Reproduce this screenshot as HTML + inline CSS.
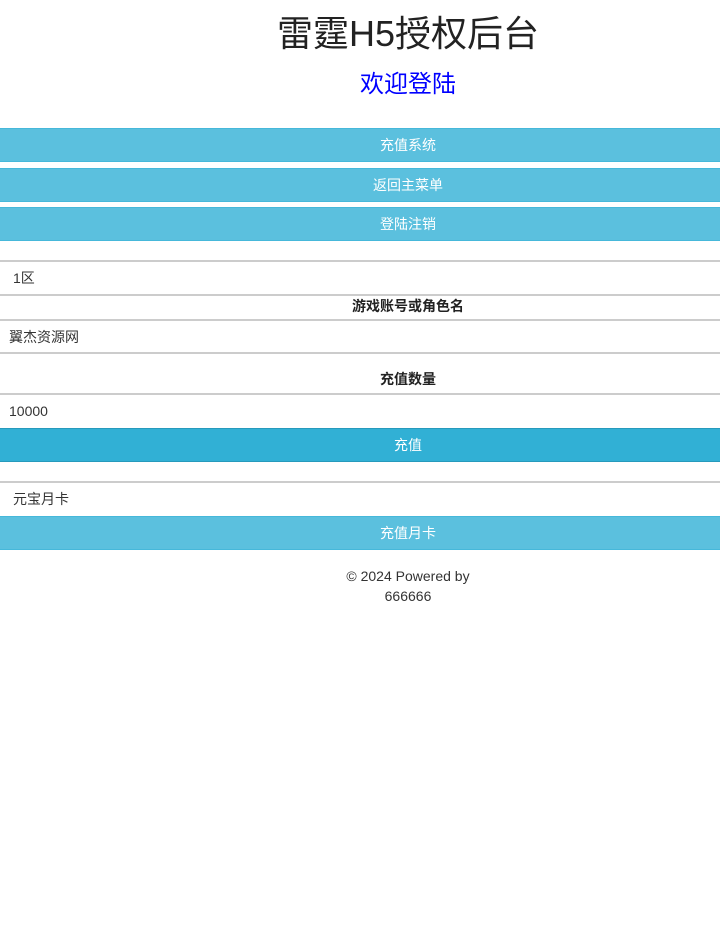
<!DOCTYPE html>
<html><head><meta charset="utf-8"><style>
*{box-sizing:border-box;margin:0;padding:0}
body{width:720px;height:931px;background:#fff;font-family:"Liberation Sans","Noto Sans CJK SC",sans-serif;color:#333;font-size:14px;position:relative;overflow:hidden}
.c{position:absolute;left:96px;width:624px;text-align:center}
.btn{position:absolute;left:0;width:720px;height:34px;background:#5bc0de;border:1px solid #46b8da;border-left:0;border-right:0;color:#fff;font-size:14px;line-height:32px}
.btn span{display:block;padding-left:96px;text-align:center}
.box{position:absolute;left:0;width:720px;border-top:2px solid #ccc;background:#fff}
.lbl{font-weight:bold;color:#222}
</style></head><body>
<div class="c" style="top:12px;font-size:36px;color:#222;line-height:44px">雷霆H5授权后台</div>
<div class="c" style="top:70px;font-size:24px;color:#00f;line-height:30px">欢迎登陆</div>
<div class="btn" style="top:128px"><span>充值系统</span></div>
<div class="btn" style="top:168px"><span>返回主菜单</span></div>
<div class="btn" style="top:207px"><span>登陆注销</span></div>
<div class="box" style="top:260px;height:35px;line-height:33px;padding-left:13px">1区</div>
<div class="box" style="top:294px;height:27px"></div>
<div class="c lbl" style="top:296px;line-height:20px">游戏账号或角色名</div>
<div class="box" style="top:319px;height:35px;line-height:33px;padding-left:9px">翼杰资源网</div>
<div class="box" style="top:352px;height:43px"></div>
<div class="c lbl" style="top:369px;line-height:20px">充值数量</div>
<div class="box" style="top:393px;height:35px;line-height:33px;padding-left:9px">10000</div>
<div class="btn" style="top:428px;background:#31b0d5;border-color:#269abc"><span>充值</span></div>
<div class="box" style="top:481px;height:35px;line-height:33px;padding-left:13px">元宝月卡</div>
<div class="btn" style="top:516px"><span>充值月卡</span></div>
<div class="c" style="top:566px;line-height:20px;color:#333">© 2024 Powered by<br>666666</div>
</body></html>
